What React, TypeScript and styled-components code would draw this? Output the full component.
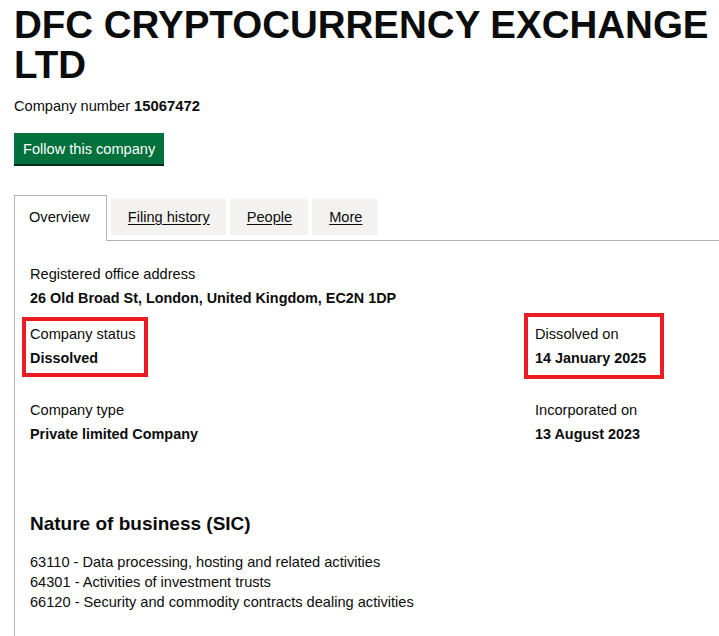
import styled, { createGlobalStyle, css } from 'styled-components';

const GlobalStyle = createGlobalStyle`
    html, body {
        margin: 0;
        padding: 0;
        background: #ffffff;
        overflow: hidden;
    }
    body {
        font-family: "Liberation Sans", Arial, sans-serif;
        color: #0b0c0c;
    }
`;

const Page = styled.main`
    padding: 5px 0 0 14px;
`;

const CompanyName = styled.h1`
    margin: 0;
    font-family: "Liberation Sans", Arial, sans-serif;
    font-weight: 700;
    font-size: 38.5px;
    line-height: 40px;
    color: #0b0c0c;
`;

const CompanyNumber = styled.p`
    margin: 11px 0 0;
    font-size: 14.6px;
    line-height: 20px;

    strong {
        font-weight: 700;
        font-size: 14.8px;
    }
`;

const FollowButton = styled.button`
    display: block;
    margin: 17px 0 0;
    padding: 6px 9px 5px;
    border: 0;
    background: #00703c;
    box-shadow: 0 2px 0 #002d18;
    color: #ffffff;
    font-family: "Liberation Sans", Arial, sans-serif;
    font-size: 14.6px;
    line-height: 20px;
    cursor: pointer;
`;

const TabList = styled.ul`
    display: flex;
    align-items: flex-start;
    gap: 4px;
    margin: 31px 0 0;
    padding: 0;
    list-style: none;
    border-bottom: 1px solid #b1b4b6;
`;

const Tab = styled.li<{ $selected?: boolean }>`
    font-size: 14.6px;
    line-height: 20px;
    background: #f3f2f1;
    margin-top: 4px;
    padding: 8px 16px 8px 17px;

    a {
        color: #0b0c0c;
        text-decoration: underline;
        text-underline-offset: 2px;
    }

    ${props =>
        props.$selected &&
        css`
            margin-top: 0;
            margin-bottom: -1px;
            padding: 11px 16px 14px 14px;
            background: #ffffff;
            border: 1px solid #b1b4b6;
            border-bottom: 0;

            a {
                text-decoration: none;
            }
        `}
`;

const Panel = styled.section`
    border-left: 1px solid #b1b4b6;
    padding: 23px 0 20px 15px;
    min-height: 380px;
`;

const Row = styled.div<{ $gap: number }>`
    display: grid;
    grid-template-columns: 505px 1fr;
    margin-top: ${props => props.$gap}px;
`;

const Field = styled.div`
    position: relative;
    width: fit-content;
`;

const Label = styled.div`
    font-size: 14.6px;
    line-height: 20px;
`;

const Value = styled.div`
    margin-top: 4px;
    font-size: 14.4px;
    line-height: 20px;
    font-weight: 700;
`;

const Highlight = styled.span<{ $left: number; $top: number; $width: number; $height: number }>`
    position: absolute;
    left: ${p => p.$left}px;
    top: ${p => p.$top}px;
    width: ${p => p.$width}px;
    height: ${p => p.$height}px;
    box-sizing: border-box;
    border: 4px solid #ec1c24;
    pointer-events: none;
`;

const SectionHeading = styled.h2`
    margin: 67px 0 0;
    font-size: 19px;
    line-height: 25px;
    font-weight: 700;
`;

const SicList = styled.ul`
    margin: 16px 0 0;
    padding: 0;
    list-style: none;
`;

const SicItem = styled.li`
    font-size: 14.6px;
    line-height: 20px;
`;

const tabs = ['Overview', 'Filing history', 'People', 'More'];

const sicCodes = [
    '63110 - Data processing, hosting and related activities',
    '64301 - Activities of investment trusts',
    '66120 - Security and commodity contracts dealing activities',
];

export default function App() {
    return (
        <>
            <GlobalStyle />
            <Page>
                <CompanyName>DFC CRYPTOCURRENCY EXCHANGE LTD</CompanyName>
                <CompanyNumber>
                    Company number <strong>15067472</strong>
                </CompanyNumber>
                <FollowButton>Follow this company</FollowButton>

                <TabList>
                    {tabs.map((tab, i) => (
                        <Tab key={tab} $selected={i === 0}>
                            <a href="#">{tab}</a>
                        </Tab>
                    ))}
                </TabList>

                <Panel>
                    <Field>
                        <Label>Registered office address</Label>
                        <Value>26 Old Broad St, London, United Kingdom, EC2N 1DP</Value>
                    </Field>

                    <Row $gap={16}>
                        <Field>
                            <Label>Company status</Label>
                            <Value>Dissolved</Value>
                            <Highlight $left={-8} $top={-7} $width={126} $height={60} />
                        </Field>
                        <Field>
                            <Label>Dissolved on</Label>
                            <Value>14 January 2025</Value>
                            <Highlight $left={-11} $top={-11} $width={140} $height={66} />
                        </Field>
                    </Row>

                    <Row $gap={32}>
                        <Field>
                            <Label>Company type</Label>
                            <Value>Private limited Company</Value>
                        </Field>
                        <Field>
                            <Label>Incorporated on</Label>
                            <Value>13 August 2023</Value>
                        </Field>
                    </Row>

                    <SectionHeading>Nature of business (SIC)</SectionHeading>
                    <SicList>
                        {sicCodes.map(code => (
                            <SicItem key={code}>{code}</SicItem>
                        ))}
                    </SicList>
                </Panel>
            </Page>
        </>
    );
}
